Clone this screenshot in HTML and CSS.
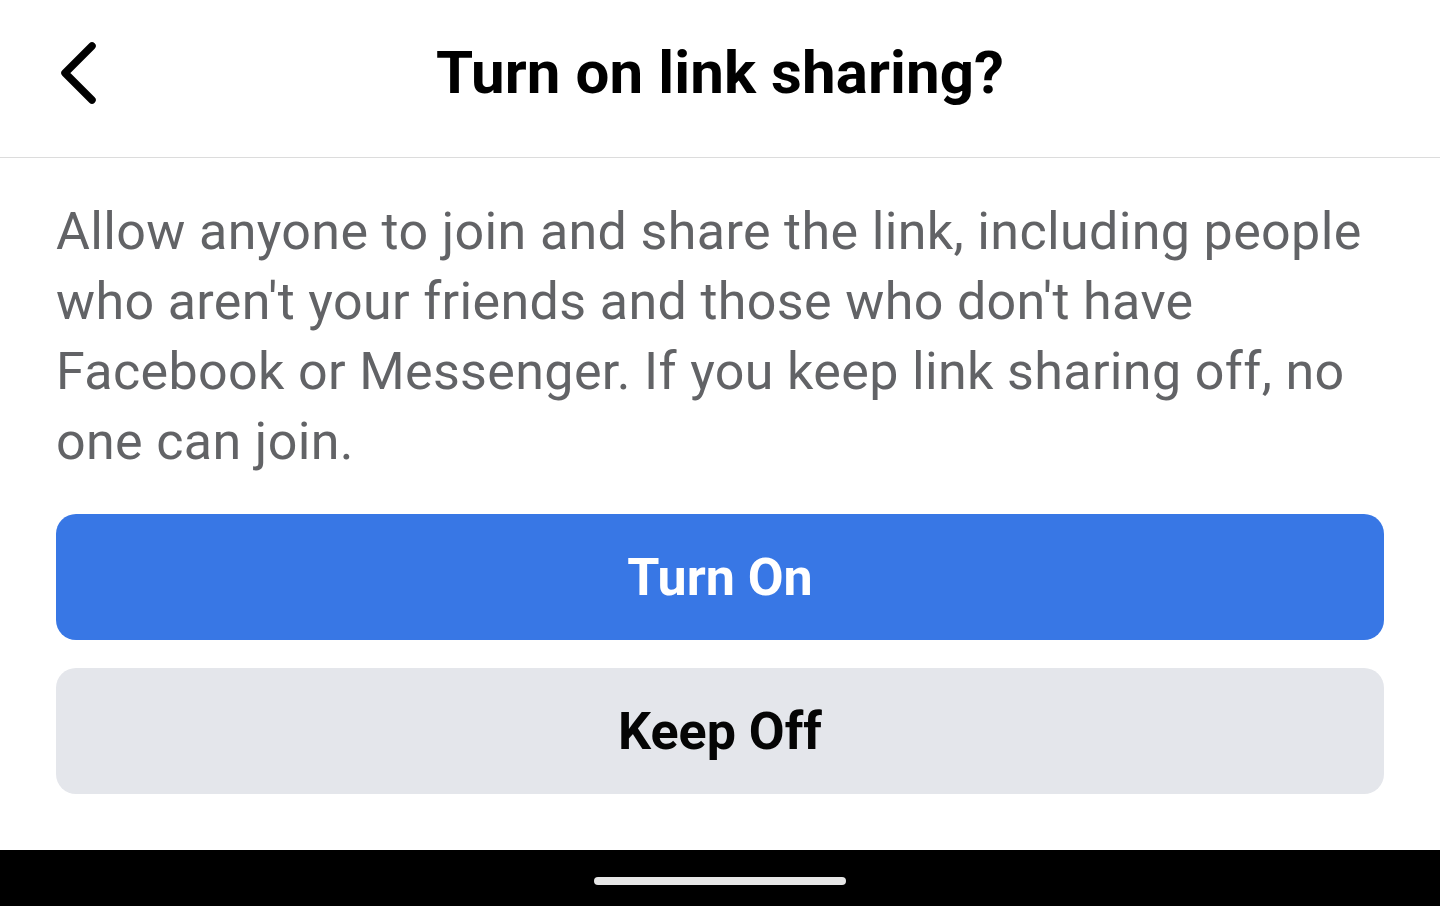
FILE: index.html
```html
<!DOCTYPE html>
<html lang="en">
<head>
<meta charset="utf-8">
<title>Turn on link sharing?</title>
<link rel="stylesheet" href="styles.css">
</head>
<body>
<div class="screen">
  <header class="topbar">
    <div class="back">
      <svg class="back-icon" width="48" height="64" viewBox="0 0 48 64" aria-hidden="true">
        <path d="M36 5 L9 32 L36 59" fill="none" stroke="#000" stroke-width="7.5" stroke-linecap="round" stroke-linejoin="round"/>
      </svg>
    </div>
    <h1 class="title">Turn on link sharing?</h1>
    <div></div>
  </header>
  <main class="content">
    <p class="desc">Allow anyone to join and share the link, including people who aren't your friends and those who don't have Facebook or Messenger. If you keep link sharing off, no one can join.</p>
    <div class="actions">
      <button class="btn btn-primary">Turn On</button>
      <button class="btn btn-secondary">Keep Off</button>
    </div>
  </main>
  <footer class="navbar">
    <span class="handle"></span>
  </footer>
</div>
</body>
</html>
```

FILE: styles.css
```css
* { box-sizing: border-box; }
html, body { margin: 0; padding: 0; }
body {
  font-family: Roboto, "Noto Sans", "Liberation Sans", sans-serif;
  background: #fff;
  color: #000;
}
.screen {
  width: 1440px;
  height: 906px;
  display: flex;
  flex-direction: column;
  overflow: hidden;
}
.topbar {
  height: 158px;
  border-bottom: 1px solid #dcdcdc;
  display: grid;
  grid-template-columns: 1fr auto 1fr;
  align-items: center;
  padding-bottom: 12px;
}
.back {
  padding-left: 56px;
  display: flex;
  align-items: center;
}
.back-icon { display: block; }
.title {
  margin: 0;
  font-size: 60px;
  font-weight: 700;
  line-height: 1;
  letter-spacing: 0.1px;
}
.content {
  padding: 39px 56px 0;
}
.desc {
  margin: 0;
  font-size: 52px;
  line-height: 70px;
  letter-spacing: 0.36px;
  color: #626366;
}
.actions {
  margin-top: 37px;
  display: flex;
  flex-direction: column;
  gap: 28px;
}
.btn {
  height: 126px;
  border: 0;
  border-radius: 20px;
  font-family: inherit;
  font-size: 52px;
  font-weight: 700;
  display: flex;
  align-items: center;
  justify-content: center;
  padding: 0;
}
.btn-primary { background: #3877e5; color: #fff; }
.btn-secondary { background: #e4e6eb; color: #050505; }
.navbar {
  margin-top: auto;
  height: 56px;
  background: #000;
  display: flex;
  justify-content: center;
  padding-top: 27px;
}
.handle {
  width: 252px;
  height: 8px;
  border-radius: 4px;
  background: #e6e6e6;
}
```
